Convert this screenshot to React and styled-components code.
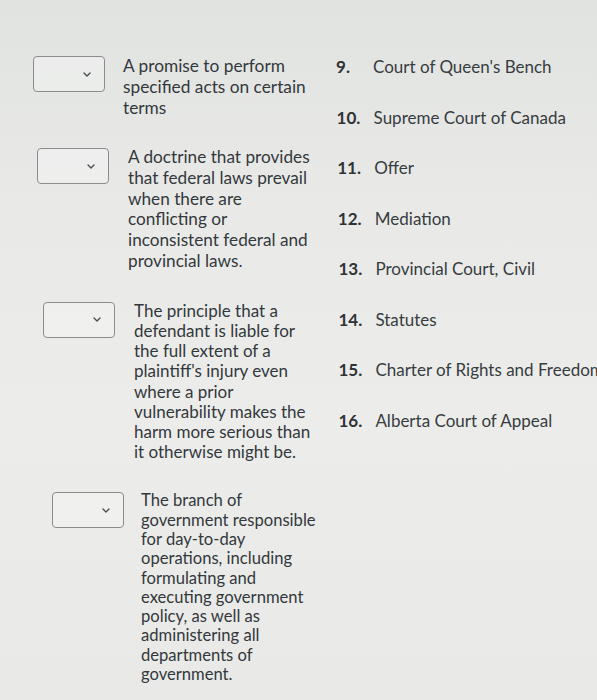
import React from "react";
import styled, { createGlobalStyle } from "styled-components";

const GlobalStyle = createGlobalStyle`
	html, body {
		margin: 0;
		padding: 0;
	}
	body {
		width: 597px;
		height: 700px;
		overflow: hidden;
		font-family: Lato, "Open Sans", sans-serif;
		background: linear-gradient(180deg, #e1e3e1 0%, #e9eae8 30%, #ecedeb 60%, #e9e9e7 100%);
	}
`

const Page = styled.div`
	display: flex;
	padding-top: 56px;
	height: 700px;
	box-sizing: border-box;
	overflow: hidden;
`

const LeftColumn = styled.div`
	width: 336px;
	flex-shrink: 0;
	display: flex;
	flex-direction: column;
	gap: 30px;
`

const Row = styled.div`
	display: flex;
	align-items: flex-start;
	padding-left: ${p => p.indent}px;
`

const SelectBox = styled.div`
	width: 72px;
	height: 36px;
	border: 1px solid #8a8d8f;
	border-radius: 4px;
	background: rgba(250, 250, 248, 0.35);
	display: flex;
	align-items: center;
	justify-content: flex-end;
	padding-right: 13px;
	box-sizing: border-box;
	flex-shrink: 0;
`

const Prompt = styled.div`
	margin-left: ${p => p.offset}px;
	width: ${p => p.w}px;
	font-size: ${p => p.size}px;
	line-height: ${p => p.lh}px;
	color: #33383c;
	margin-top: -1px;
`

const RightColumn = styled.ol`
	list-style: none;
	margin: 0;
	padding: 0;
	display: flex;
	flex-direction: column;
	min-width: 0;
`

const Answer = styled.li`
	display: flex;
	align-items: baseline;
	height: 50.5px;
	padding-left: ${p => p.indent}px;
	white-space: nowrap;
	font-size: 17px;
	color: #373c40;
`

const Num = styled.span`
	width: 37px;
	font-weight: 700;
	color: #2f3336;
	flex-shrink: 0;
`

const Chevron = () => (
	<svg width="8" height="5" viewBox="0 0 8 5">
		<path d="M1 1 L4 4 L7 1" fill="none" stroke="#4a4e52" strokeWidth="1.4" strokeLinecap="round" strokeLinejoin="round" />
	</svg>
)

const prompts = [
	{ indent: 33, offset: 18, size: 17.3, w: 190, lh: 21, text: "A promise to perform specified acts on certain terms" },
	{ indent: 37, offset: 19, size: 17.2, w: 190, lh: 20.8, text: "A doctrine that provides that federal laws prevail when there are conflicting or inconsistent federal and provincial laws." },
	{ indent: 43, offset: 19, size: 17, w: 184, lh: 20.2, text: "The principle that a defendant is liable for the full extent of a plaintiff's injury even where a prior vulnerability makes the harm more serious than it otherwise might be." },
	{ indent: 52, offset: 17, size: 16.6, w: 176, lh: 19.3, text: "The branch of government responsible for day-to-day operations, including formulating and executing government policy, as well as administering all departments of government." },
]

const answers = [
	"Court of Queen's Bench",
	"Supreme Court of Canada",
	"Offer",
	"Mediation",
	"Provincial Court, Civil",
	"Statutes",
	"Charter of Rights and Freedoms",
	"Alberta Court of Appeal",
]

const App = () => (
	<>
		<GlobalStyle />
		<Page>
			<LeftColumn>
				{prompts.map((p, i) => (
					<Row key={i} indent={p.indent}>
						<SelectBox>
							<Chevron />
						</SelectBox>
						<Prompt offset={p.offset} size={p.size} w={p.w} lh={p.lh}>{p.text}</Prompt>
					</Row>
				))}
			</LeftColumn>
			<RightColumn>
				{answers.map((a, i) => (
					<Answer key={a} indent={Math.min(i, 4) * 0.6}>
						<Num>{i + 9}.</Num>
						{a}
					</Answer>
				))}
			</RightColumn>
		</Page>
	</>
)

export default App
